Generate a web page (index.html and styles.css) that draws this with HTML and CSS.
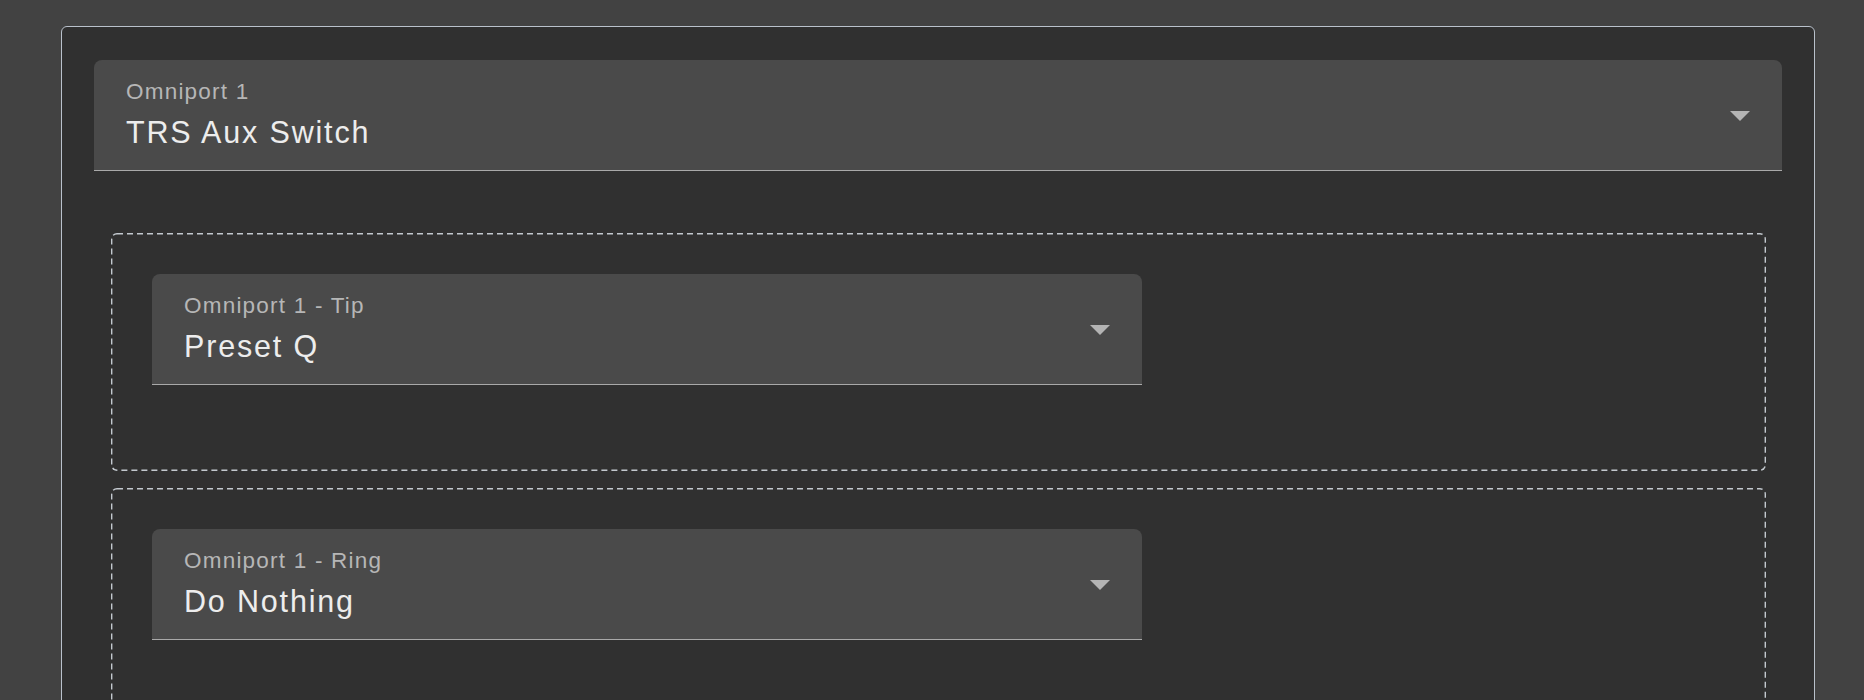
FILE: index.html
```html
<!DOCTYPE html>
<html lang="en">
<head>
<meta charset="utf-8">
<title>Omniport settings</title>
<link rel="stylesheet" href="styles.css">
</head>
<body>
  <div class="card">
    <div class="select select-full">
      <div class="select-text">
        <div class="select-label">Omniport 1</div>
        <div class="select-value">TRS Aux Switch</div>
      </div>
      <span class="select-arrow"></span>
    </div>

    <div class="group">
      <div class="select select-half">
        <div class="select-text">
          <div class="select-label">Omniport 1 - Tip</div>
          <div class="select-value">Preset Q</div>
        </div>
        <span class="select-arrow"></span>
      </div>
    </div>

    <div class="group">
      <div class="select select-half">
        <div class="select-text">
          <div class="select-label">Omniport 1 - Ring</div>
          <div class="select-value">Do Nothing</div>
        </div>
        <span class="select-arrow"></span>
      </div>
    </div>
  </div>
</body>
</html>
```

FILE: styles.css
```css
* {
  box-sizing: border-box;
}

html, body {
  margin: 0;
  background: #424242;
  height: 100%;
  overflow: hidden;
}

body {
  padding-top: 26px;
  font-family: "Liberation Sans", Arial, sans-serif;
}

.card {
  margin-left: 61px;
  width: 1754px;
  background: #303030;
  border: 1px solid #b9c1cb;
  border-radius: 6px;
  padding: 33px 32px 40px 32px;
}

.select {
  display: flex;
  align-items: center;
  background: #4a4a4a;
  border-radius: 8px 8px 0 0;
  border-bottom: 1px solid #a9a9a9;
  padding: 0 32px;
  height: 111px;
}

.select-full {
  width: 100%;
}

.select-half {
  width: 990px;
}

.select-text {
  flex: 1;
  display: flex;
  flex-direction: column;
  padding-top: 20px;
  padding-bottom: 20px;
}

.select-label {
  font-size: 22.5px;
  line-height: 24px;
  letter-spacing: 0.054em;
  color: #b6b6b6;
  margin-bottom: 10px;
}

.select-value {
  font-size: 30.5px;
  line-height: 36px;
  letter-spacing: 0.06em;
  color: #ededed;
}

.select-arrow {
  width: 0;
  height: 0;
  border-left: 10px solid transparent;
  border-right: 10px solid transparent;
  border-top: 10px solid #b4b4b4;
  margin-top: 1px;
}

.group {
  margin: 0 16px 0 17px;
  border: 1px solid transparent;
  border-radius: 6px;
  padding: 40px 40px 85px 40px;
  background-origin: border-box;
  background-repeat: no-repeat;
  background-image: url("data:image/svg+xml,%3Csvg xmlns='http://www.w3.org/2000/svg' width='100%25' height='100%25'%3E%3Crect x='0' y='0' width='100%25' height='100%25' rx='6' ry='6' fill='none' stroke='%23c3c9cf' stroke-width='2.8' stroke-dasharray='6 4'/%3E%3C/svg%3E");
}

.select-full + .group {
  margin-top: 62px;
}

.group + .group {
  margin-top: 17px;
}
```
